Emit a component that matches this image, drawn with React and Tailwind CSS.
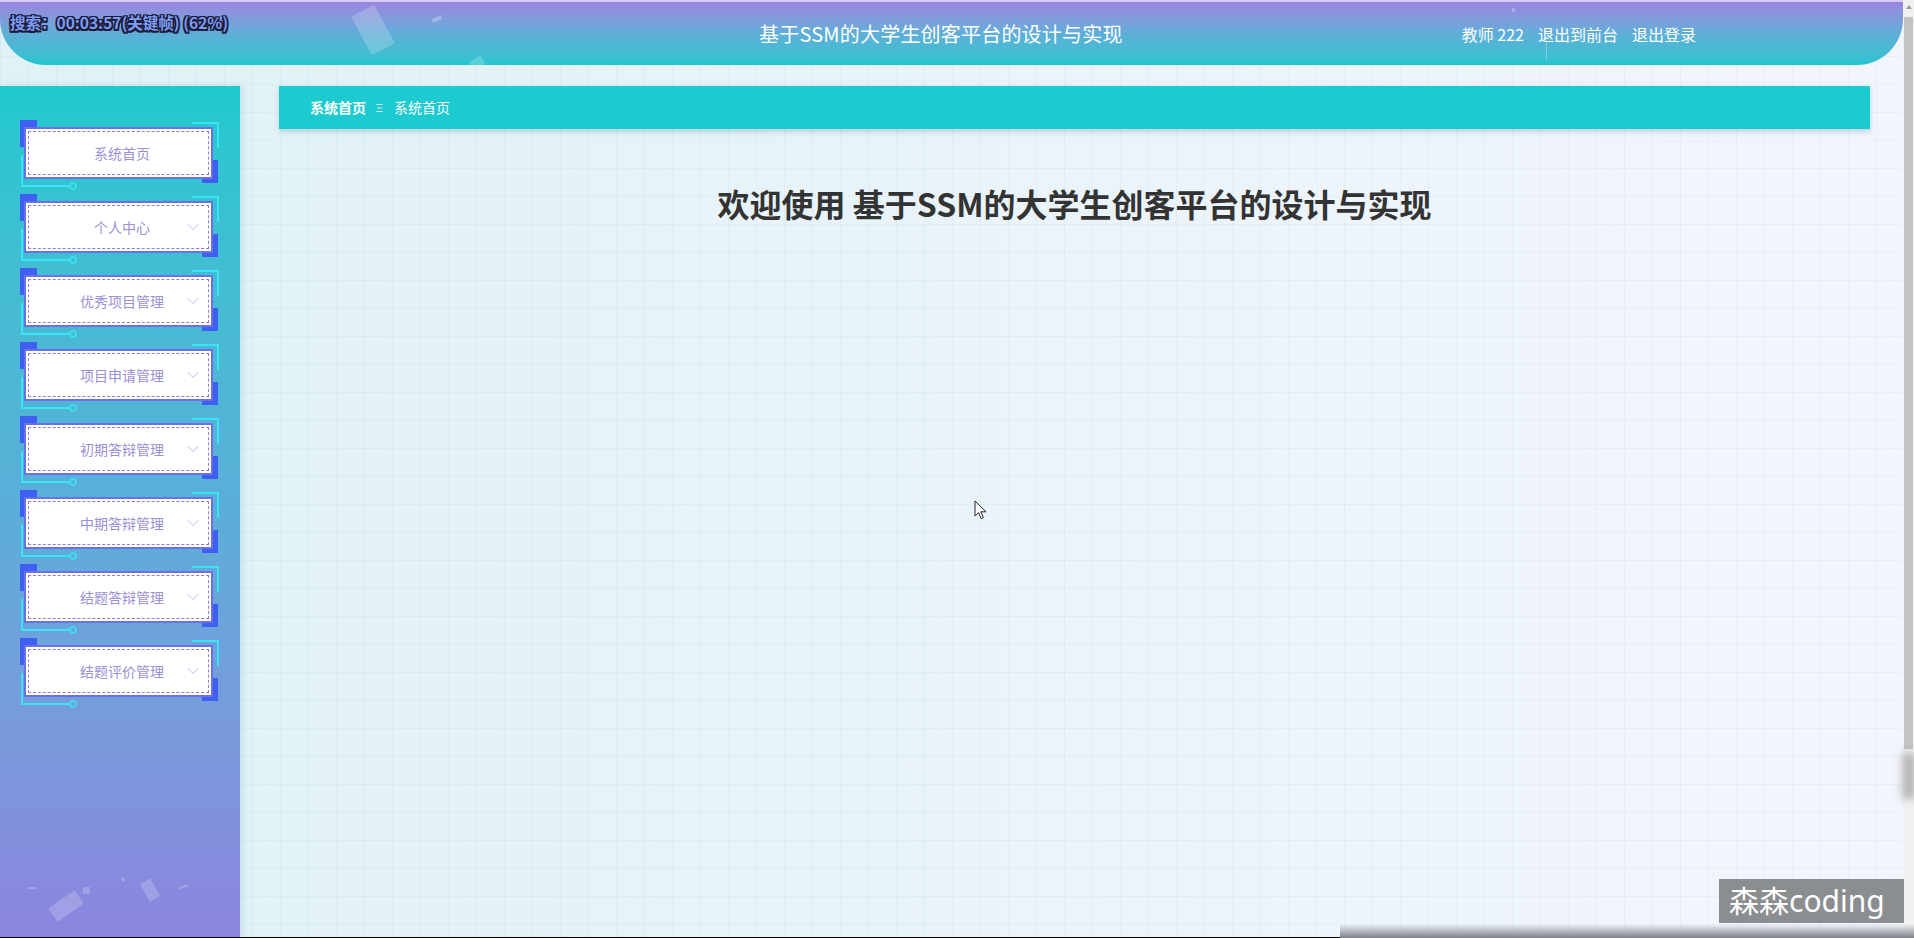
import { ChevronDown } from 'lucide-react'

const menu = [
  { label: '系统首页', arrow: false },
  { label: '个人中心', arrow: true },
  { label: '优秀项目管理', arrow: true },
  { label: '项目申请管理', arrow: true },
  { label: '初期答辩管理', arrow: true },
  { label: '中期答辩管理', arrow: true },
  { label: '结题答辩管理', arrow: true },
  { label: '结题评价管理', arrow: true },
]

function NavItem({ label, arrow }) {
  return (
    <div className="relative ml-[20px] h-[74px] w-[200px] pl-[4px] pt-[7px]">
      {/* frame ornaments */}
      <svg width="200" height="74" viewBox="0 0 200 74" className="absolute inset-0">
        <rect x="0" y="0" width="17" height="27" fill="#3f5ef2" />
        <rect x="182" y="40" width="16" height="23" fill="#3f5ef2" />
        <path d="M172 3H198V28" stroke="#3ae3f5" strokeWidth="2" fill="none" />
        <path d="M2 35V66H50" stroke="#3ae3f5" strokeWidth="2" fill="none" />
        <circle cx="53" cy="66" r="3" stroke="#3ae3f5" strokeWidth="1.6" fill="none" />
      </svg>

      <div className="relative h-[52px] w-[189px] border-2 border-[#6a70e8] bg-white p-[2px]">
        <div className="flex h-full items-center justify-center border border-dashed border-[#8f7bd2] pl-[7px] text-[14px] text-[#9b90d6]">
          {label}
        </div>
        {arrow && (
          <ChevronDown
            size={20}
            strokeWidth={1.1}
            className="absolute right-[8px] top-1/2 -translate-y-1/2 text-[#b3abe6]"
          />
        )}
      </div>
    </div>
  )
}

function Crumbs() {
  return (
    <div className="flex h-[43px] items-center bg-[#1ccad0] pl-[31px] text-[14px] text-white shadow-[0_3px_5px_rgba(40,120,140,0.25)]">
      <span className="font-bold">系统首页</span>
      <svg width="7" height="10" viewBox="0 0 7 10" className="ml-[10px] mr-[11px] opacity-80">
        <path d="M0.5 1.5h6M1.5 5h4.5M0.5 8.5h6" stroke="#fff" strokeWidth="1" fill="none" />
      </svg>
      <span>系统首页</span>
    </div>
  )
}

export default function App() {
  return (
    <div className="relative flex h-[938px] w-[1914px] overflow-hidden font-['Noto_Sans_CJK_SC',sans-serif] bg-[linear-gradient(rgba(160,185,215,0.11)_1px,transparent_1px),linear-gradient(90deg,rgba(160,185,215,0.11)_1px,transparent_1px),linear-gradient(90deg,#dff2f5,#f3f5fd)] bg-[size:28px_28px,28px_28px,100%_100%]">

      {/* page */}
      <div className="flex w-[1903px] flex-col">

        {/* Header */}
        <header className="relative flex h-[65px] shrink-0 items-center overflow-hidden rounded-b-[46px] border-t-2 border-[#d6cef5] bg-linear-to-b from-[#9985e0] via-[#5eaed8] to-[#21c6cf] pl-[759px] text-white">
          <svg width="1903" height="63" viewBox="0 0 1903 63" className="absolute inset-0">
            <rect x="360" y="6" width="26" height="44" fill="#fff" opacity="0.2" transform="rotate(-28 373 28)" />
            <rect x="432" y="15" width="10" height="4" fill="#fff" opacity="0.25" transform="rotate(-25 437 17)" />
            <rect x="470" y="56" width="14" height="10" fill="#fff" opacity="0.2" transform="rotate(-30 477 61)" />
            <rect x="1512" y="6" width="3" height="4" fill="#fff" opacity="0.25" />
            <rect x="1546" y="40" width="1" height="18" fill="#fff" opacity="0.3" />
          </svg>

          <h1 className="relative text-[20px] font-normal tracking-[0.2px]">基于SSM的大学生创客平台的设计与实现</h1>
          <div className="relative ml-auto mr-[207px] flex items-center gap-[14px] text-[16px]">
            <span>教师 222</span>
            <span>退出到前台</span>
            <span>退出登录</span>
          </div>
        </header>

        <div className="mt-[21px] flex flex-1">

          {/* Sidebar */}
          <aside className="relative w-[240px] shrink-0 overflow-hidden bg-linear-to-b from-[#1dc9cd] via-[#5aaed8] to-[#8c85df] pt-[34px] shadow-[3px_0_6px_rgba(120,170,200,0.25)]">
            {menu.map(m => (
              <NavItem key={m.label} label={m.label} arrow={m.arrow} />
            ))}
            <svg width="240" height="60" viewBox="0 0 240 60" className="absolute bottom-0 left-0">
              <rect x="50" y="20" width="32" height="16" fill="#fff" opacity="0.2" transform="rotate(-35 66 28)" />
              <rect x="144" y="2" width="12" height="20" fill="#fff" opacity="0.2" transform="rotate(-30 150 12)" />
              <rect x="83" y="9" width="7" height="7" fill="#fff" opacity="0.2" />
              <rect x="121" y="-4" width="3" height="8" fill="#fff" opacity="0.2" transform="rotate(-15 122 0)" />
              <rect x="27" y="9" width="10" height="2" fill="#fff" opacity="0.2" />
              <rect x="178" y="8" width="10" height="2" fill="#fff" opacity="0.2" transform="rotate(-20 183 9)" />
            </svg>
          </aside>

          {/* Main */}
          <main className="flex-1 pl-[39px] pr-[33px]">
            <Crumbs />
            <h2 className="mt-[54px] text-center text-[32px] font-bold leading-[40px] text-[#333]">
              欢迎使用 基于SSM的大学生创客平台的设计与实现
            </h2>
          </main>
        </div>
      </div>

      {/* Scrollbar */}
      <div className="flex w-[11px] flex-col items-center bg-[#f1f1f1]">
        <div className="mt-[5px] h-0 w-0 border-x-[3px] border-b-[4px] border-x-transparent border-b-[#a0a0a0]" />
        <div className="mt-[8px] h-[732px] w-[9px] bg-[#c3c3c3]" />
        <div className="mt-[4px] h-[46px] w-[14px] bg-[#8f8f8f]/60 blur-[4px]" />
      </div>

      {/* Recording overlays */}
      <div className="absolute left-[10px] top-[11px] text-[15.5px] font-bold leading-[22px] text-[#7f9bf0] [text-shadow:-1.5px_-1.5px_0_#1b1d3a,1.5px_-1.5px_0_#1b1d3a,-1.5px_1.5px_0_#1b1d3a,1.5px_1.5px_0_#1b1d3a,0_1.5px_0_#1b1d3a,0_-1.5px_0_#1b1d3a,1.5px_0_0_#1b1d3a,-1.5px_0_0_#1b1d3a]">
        搜索：00:03:57(关键帧) (62%)
      </div>

      <svg width="13" height="20" viewBox="0 0 13 20" className="absolute left-[974px] top-[500px]">
        <path d="M1 1v15l3.6-3.4 2.6 6 2.2-1-2.6-5.8H12z" fill="#fff" stroke="#222" strokeWidth="1" strokeLinejoin="round" />
      </svg>

      <div className="absolute left-[1719px] top-[879px] flex h-[44px] w-[185px] items-center bg-[#8b8e91] pl-[10px] font-['Noto_Sans','Noto_Sans_CJK_SC',sans-serif] text-[30px] leading-none text-white">
        森森coding
      </div>

      <div className="absolute bottom-0 left-0 h-[1px] w-[1340px] bg-black" />
      <div className="absolute bottom-0 left-[1340px] h-[14px] w-[574px] bg-linear-to-b from-transparent to-[#7d8187]" />
    </div>
  )
}
